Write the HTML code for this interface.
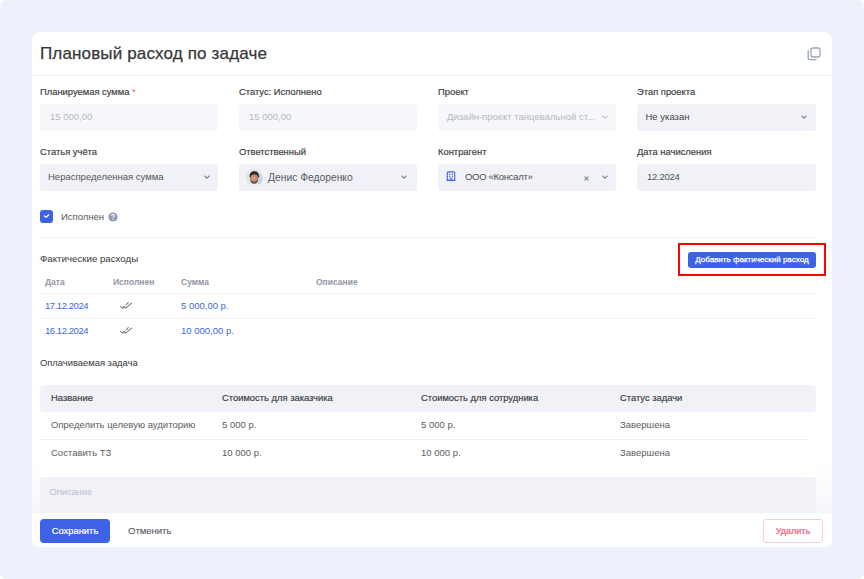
<!DOCTYPE html>
<html><head><meta charset="utf-8">
<style>
*{box-sizing:border-box;margin:0;padding:0}
html,body{width:864px;height:579px;overflow:hidden;background:#fff;font-family:"Liberation Sans",sans-serif}
.bg{position:absolute;left:0;top:0;width:864px;height:579px;background:#EEF0FB;border-radius:7px}
.card{position:absolute;left:32px;top:32px;width:800px;height:515px;background:#fff;border-radius:8px;overflow:hidden}
.a{position:absolute;white-space:nowrap}
.title{left:8px;top:12px;font-size:17px;line-height:20px;color:#36373b;letter-spacing:0.15px;-webkit-text-stroke:0.25px #36373b}
.hline{position:absolute;left:0;top:43px;width:800px;height:1px;background:#EEEFF3}
.lbl{font-size:9.4px;line-height:11px;color:#3c3e43;-webkit-text-stroke:0.18px #3c3e43}
.lbl span{-webkit-text-stroke:0}
.inp{position:absolute;height:27px;border-radius:3px;background:#F1F2F7}
.inp.dis{background:#F6F7FB}
.inp .t{position:absolute;top:7px;font-size:9.5px;line-height:11px;color:#53565d;white-space:nowrap}
.inp.dis .t{color:#B4B7C0}
.chev{position:absolute;top:11px;width:6px;height:4px}
</style></head>
<body>
<div class="bg"></div>
<div class="card">
  <div class="a title">Плановый расход по задаче</div>
  <svg class="a" style="left:775px;top:15px" width="14" height="14" viewBox="0 0 14 14" fill="none" stroke="#98A3B8" stroke-width="1.3"><rect x="4" y="1" width="9" height="9" rx="1.8"/><path d="M1.2 3.3V11.6a1 1 0 0 0 1 1H9.5"/></svg>
  <div class="hline"></div>

  <!-- row 1 labels -->
  <div class="a lbl" style="left:8px;top:54px">Планируемая сумма <span style="color:#F2546E">*</span></div>
  <div class="a lbl" style="left:207px;top:54px">Статус: Исполнено</div>
  <div class="a lbl" style="left:406px;top:54px">Проект</div>
  <div class="a lbl" style="left:605px;top:54px">Этап проекта</div>

  <div class="inp dis" style="left:8px;top:72px;width:178px"><div class="t" style="left:10px">15 000,00</div></div>
  <div class="inp dis" style="left:207px;top:72px;width:178px"><div class="t" style="left:10px">15 000,00</div></div>
  <div class="inp dis" style="left:406px;top:72px;width:178px"><div class="t" style="left:9px">Дизайн-проект танцевальной ст...</div>
    <svg class="chev" style="left:164px" viewBox="0 0 6 4"><path d="M0.6 0.8L3 3.1L5.4 0.8" fill="none" stroke="#C2C6D0" stroke-width="1.3"/></svg></div>
  <div class="inp" style="left:605px;top:72px;width:179px"><div class="t" style="left:8.5px;color:#44474d">Не указан</div>
    <svg class="chev" style="left:164px" viewBox="0 0 6 4"><path d="M0.6 0.8L3 3.1L5.4 0.8" fill="none" stroke="#7F8799" stroke-width="1.2"/></svg></div>

  <!-- row 2 labels -->
  <div class="a lbl" style="left:8px;top:113.5px">Статья учёта</div>
  <div class="a lbl" style="left:207px;top:113.5px">Ответственный</div>
  <div class="a lbl" style="left:406px;top:113.5px">Контрагент</div>
  <div class="a lbl" style="left:605px;top:113.5px">Дата начисления</div>

  <div class="inp" style="left:8px;top:132px;width:178px"><div class="t" style="left:8px">Нераспределенная сумма</div>
    <svg class="chev" style="left:164px" viewBox="0 0 6 4"><path d="M0.6 0.8L3 3.1L5.4 0.8" fill="none" stroke="#7F8799" stroke-width="1.2"/></svg></div>
  <div class="inp" style="left:207px;top:132px;width:178px">
    <svg style="position:absolute;left:7px;top:5px" width="17" height="17" viewBox="0 0 17 17">
      <defs><clipPath id="cav"><circle cx="8.5" cy="8.5" r="8.5"/></clipPath><radialGradient id="fc" cx="0.45" cy="0.45" r="0.6"><stop offset="0" stop-color="#d9a58f"/><stop offset="1" stop-color="#a8705c"/></radialGradient></defs>
      <g clip-path="url(#cav)">
        <rect width="17" height="17" fill="#dfe6ec"/>
        <path d="M12.5 4 L17 8 L17 17 L12 17Z" fill="#c9d6e0"/>
        <ellipse cx="8.2" cy="9.6" rx="4.1" ry="5.3" fill="url(#fc)"/>
        <path d="M3.6 8.2C3.4 3.6 6 2.3 8.4 2.3s4.9 1.4 4.7 5.8l-.9.6C11.8 6.2 10.6 5.3 8.3 5.3S4.9 6.2 4.5 8.6Z" fill="#33241d"/>
        <path d="M4.3 10.2c.3 3.5 2.3 5 3.9 5s3.6-1.5 3.9-5c-.8 1.6-1.9 2.2-3.9 2.2s-3.1-.6-3.9-2.2Z" fill="#6e4b3c" opacity="0.85"/>
        <path d="M1.5 17.5c1-2.2 3.5-2.8 7-2.8s6 .6 7 2.8Z" fill="#eef2f5"/>
      </g></svg>
    <div class="t" style="left:29px;top:8px;font-size:10.3px;color:#56595f">Денис Федоренко</div>
    <svg class="chev" style="left:162px" viewBox="0 0 6 4"><path d="M0.6 0.8L3 3.1L5.4 0.8" fill="none" stroke="#7F8799" stroke-width="1.2"/></svg></div>
  <div class="inp" style="left:406px;top:132px;width:178px">
    <svg style="position:absolute;left:8px;top:7px" width="10" height="10" viewBox="0 0 10 10"><path d="M1.3 9.4V2.1a1.2 1.2 0 0 1 1.2-1.2h5a1.2 1.2 0 0 1 1.2 1.2v7.3" fill="none" stroke="#3D63E8" stroke-width="1.1"/><path d="M0.6 9.4h8.8" stroke="#3D63E8" stroke-width="1.1"/><g fill="#3D63E8"><rect x="3" y="2.6" width="1.3" height="1.2"/><rect x="5.7" y="2.6" width="1.3" height="1.2"/><rect x="3" y="4.7" width="1.3" height="1.2"/><rect x="5.7" y="4.7" width="1.3" height="1.2"/></g><path d="M4.1 9.4V7.1h1.8v2.3" fill="none" stroke="#3D63E8" stroke-width="0.9"/></svg>
    <div class="t" style="left:27px;color:#4b4e56;letter-spacing:-0.3px">ООО «Консалт»</div>
    <svg style="position:absolute;left:146px;top:12px" width="5" height="5" viewBox="0 0 5 5"><path d="M0.6 0.6L4.4 4.4M4.4 0.6L0.6 4.4" stroke="#7b808c" stroke-width="1.1"/></svg>
    <svg class="chev" style="left:164px" viewBox="0 0 6 4"><path d="M0.6 0.8L3 3.1L5.4 0.8" fill="none" stroke="#7F8799" stroke-width="1.2"/></svg></div>
  <div class="inp" style="left:605px;top:132px;width:179px"><div class="t" style="left:10px;color:#505359;letter-spacing:-0.25px">12.2024</div></div>

  <!-- checkbox -->
  <div class="a" style="left:8px;top:178px;width:13px;height:13px;border-radius:3px;background:#3D62E6"></div>
  <svg class="a" style="left:8px;top:178px" width="13" height="13" viewBox="0 0 13 13"><path d="M4.3 5.9L6.1 7.2L8.7 4.7" fill="none" stroke="#fff" stroke-width="1.2" stroke-linecap="round" stroke-linejoin="round"/></svg>
  <div class="a" style="left:29px;top:179px;font-size:9.5px;line-height:11px;color:#55585e">Исполнен</div>
  <svg class="a" style="left:75.5px;top:179.5px" width="10" height="10" viewBox="0 0 10 10"><circle cx="5" cy="5" r="4.6" fill="#8F9BB2"/><path d="M3.7 3.9a1.35 1.35 0 1 1 1.9 1.2c-.45.3-.6.5-.6 1" fill="none" stroke="#fff" stroke-width="1.1"/><circle cx="5" cy="7.4" r=".65" fill="#fff"/></svg>

  <div class="a" style="left:8px;top:205px;width:776px;height:1px;background:#EFF0F4"></div>

  <div class="a lbl" style="left:8px;top:220.5px;font-size:9.7px;-webkit-text-stroke:0;color:#36383c">Фактические расходы</div>

  <!-- red box + button -->
  <div class="a" style="left:646px;top:211px;width:148px;height:33px;border:2px solid #FF0000"></div>
  <div class="a" style="left:656px;top:220px;width:128px;height:16px;border-radius:3px;background:#3D62E6;color:#fff;font-size:8px;line-height:16px;text-align:center;-webkit-text-stroke:0.25px #fff">Добавить фактический расход</div>

  <!-- table 1 -->
  <div class="a" style="left:13px;top:245px;font-size:8.5px;line-height:11px;color:#9197A3;font-weight:bold">Дата</div>
  <div class="a" style="left:81px;top:245px;font-size:8.5px;line-height:11px;color:#9197A3;font-weight:bold">Исполнен</div>
  <div class="a" style="left:149px;top:245px;font-size:8.5px;line-height:11px;color:#9197A3;font-weight:bold">Сумма</div>
  <div class="a" style="left:284px;top:245px;font-size:8.5px;line-height:11px;color:#9197A3;font-weight:bold">Описание</div>
  <div class="a" style="left:8px;top:261px;width:776px;height:1px;background:#F0F1F4"></div>
  <div class="a" style="left:13px;top:268px;font-size:9.5px;line-height:11px;color:#4068E0;letter-spacing:-0.45px">17.12.2024</div>
  <svg class="a" style="left:87px;top:268px" width="14" height="11" viewBox="0 0 14 11" fill="none" stroke="#767676" stroke-width="1.05" stroke-linecap="round"><path d="M1.5 6.3L3.9 8.3L5.6 6.5M7 5L9.3 2.6M4.6 6.3L6.7 8.1L12.6 3.1"/></svg>
  <div class="a" style="left:149px;top:268px;font-size:9.5px;line-height:11px;color:#4068E0">5 000,00 р.</div>
  <div class="a" style="left:8px;top:286px;width:776px;height:1px;background:#F0F1F4"></div>
  <div class="a" style="left:13px;top:293px;font-size:9.5px;line-height:11px;color:#4068E0;letter-spacing:-0.45px">16.12.2024</div>
  <svg class="a" style="left:87px;top:293px" width="14" height="11" viewBox="0 0 14 11" fill="none" stroke="#767676" stroke-width="1.05" stroke-linecap="round"><path d="M1.5 6.3L3.9 8.3L5.6 6.5M7 5L9.3 2.6M4.6 6.3L6.7 8.1L12.6 3.1"/></svg>
  <div class="a" style="left:149px;top:293px;font-size:9.5px;line-height:11px;color:#4068E0">10 000,00 р.</div>

  <div class="a lbl" style="left:8px;top:325px;-webkit-text-stroke:0;color:#36383c">Оплачиваемая задача</div>

  <!-- table 2 -->
  <div class="a" style="left:8px;top:353px;width:776px;height:27px;border-radius:4px;background:#F1F2F7"></div>
  <div class="a lbl" style="left:19px;top:360px">Название</div>
  <div class="a lbl" style="left:190px;top:360px">Стоимость для заказчика</div>
  <div class="a lbl" style="left:389px;top:360px">Стоимость для сотрудника</div>
  <div class="a lbl" style="left:588px;top:360px">Статус задачи</div>
  <div class="a" style="left:19px;top:387px;font-size:9.5px;line-height:11px;color:#5a5d63">Определить целевую аудиторию</div>
  <div class="a" style="left:190px;top:387px;font-size:9.5px;line-height:11px;color:#5a5d63">5 000 р.</div>
  <div class="a" style="left:389px;top:387px;font-size:9.5px;line-height:11px;color:#5a5d63">5 000 р.</div>
  <div class="a" style="left:588px;top:387px;font-size:9.5px;line-height:11px;color:#5a5d63">Завершена</div>
  <div class="a" style="left:8px;top:407px;width:769px;height:1px;background:#EEEFF3"></div>
  <div class="a" style="left:19px;top:415px;font-size:9.5px;line-height:11px;color:#5a5d63">Составить ТЗ</div>
  <div class="a" style="left:190px;top:415px;font-size:9.5px;line-height:11px;color:#5a5d63">10 000 р.</div>
  <div class="a" style="left:389px;top:415px;font-size:9.5px;line-height:11px;color:#5a5d63">10 000 р.</div>
  <div class="a" style="left:588px;top:415px;font-size:9.5px;line-height:11px;color:#5a5d63">Завершена</div>

  <!-- description -->
  <div class="a" style="left:8px;top:445px;width:776px;height:40px;border-radius:3px;background:#F1F2F7"></div>
  <div class="a" style="left:17.5px;top:454px;font-size:9.5px;line-height:11px;color:#BCC1CB;letter-spacing:-0.15px">Описание</div>

  <!-- footer -->
  <div class="a" style="left:0;top:430px;width:8px;height:51px;background:linear-gradient(#fff,#F6F7FB)"></div>
  <div class="a" style="left:784px;top:430px;width:16px;height:51px;background:linear-gradient(#fff,#F6F7FB)"></div>
  <div class="a" style="left:0;top:481px;width:800px;height:34px;background:#fff"></div>
  <div class="a" style="left:8px;top:487px;width:70px;height:24px;border-radius:4px;background:#3D62E6;color:#fff;font-size:9.4px;line-height:24px;text-align:center;-webkit-text-stroke:0.2px #fff">Сохранить</div>
  <div class="a" style="left:96px;top:493px;font-size:9.5px;line-height:11px;color:#55585f;-webkit-text-stroke:0.1px #55585f">Отменить</div>
  <div class="a" style="left:731px;top:487px;width:60px;height:24px;border-radius:3px;border:1px solid #FBCBD4;color:#F2587A;font-size:9px;line-height:22px;text-align:center;-webkit-text-stroke:0.2px #F2587A">Удалить</div>
</div>
</body></html>
